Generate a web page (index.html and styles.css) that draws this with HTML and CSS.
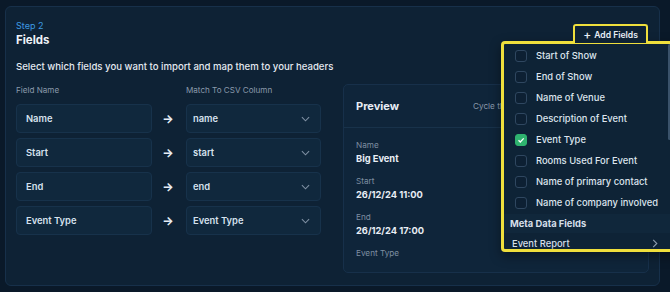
FILE: index.html
```html
<!DOCTYPE html>
<html lang="en">
<head>
  <meta charset="UTF-8"/>
  <title>Import - Fields</title>
  <link rel="stylesheet" href="styles.css">
</head>
<body>
  <div class="card">
    <div class="card-head">
      <div>
        <div class="step">Step 2</div>
        <h2>Fields</h2>
      </div>
      <button class="add-btn"><span class="plus">+</span> Add Fields</button>
    </div>
    <p class="intro">Select which fields you want to import and map them to your headers</p>

    <div class="content">
      <div class="mapping">
        <div class="map-head">
          <span>Field Name</span>
          <span></span>
          <span>Match To CSV Column</span>
        </div>
        <div class="map-row">
          <div class="field">Name</div>
          <span class="arrow">&#x2192;</span>
          <div class="select">name <svg viewBox="0 0 10 6"><path d="M1 1l4 4 4-4"/></svg></div>
        </div>
        <div class="map-row">
          <div class="field">Start</div>
          <span class="arrow">&#x2192;</span>
          <div class="select">start <svg viewBox="0 0 10 6"><path d="M1 1l4 4 4-4"/></svg></div>
        </div>
        <div class="map-row">
          <div class="field">End</div>
          <span class="arrow">&#x2192;</span>
          <div class="select">end <svg viewBox="0 0 10 6"><path d="M1 1l4 4 4-4"/></svg></div>
        </div>
        <div class="map-row">
          <div class="field">Event Type</div>
          <span class="arrow">&#x2192;</span>
          <div class="select">Event Type <svg viewBox="0 0 10 6"><path d="M1 1l4 4 4-4"/></svg></div>
        </div>
      </div>

      <div class="preview">
        <div class="preview-head">
          <h3>Preview</h3>
          <span class="cycle">Cycle through rows</span>
        </div>
        <div class="preview-body">
          <div class="pv-item"><div class="pv-label">Name</div><div class="pv-value">Big Event</div></div>
          <div class="pv-item"><div class="pv-label">Start</div><div class="pv-value">26/12/24 11:00</div></div>
          <div class="pv-item"><div class="pv-label">End</div><div class="pv-value">26/12/24 17:00</div></div>
          <div class="pv-item"><div class="pv-label">Event Type</div></div>
        </div>
      </div>
    </div>
  </div>

  <!-- Add fields menu -->
  <div class="menu">
    <label class="opt"><span class="box"></span>Start of Show</label>
    <label class="opt"><span class="box"></span>End of Show</label>
    <label class="opt"><span class="box"></span>Name of Venue</label>
    <label class="opt"><span class="box"></span>Description of Event</label>
    <label class="opt"><span class="box checked"><svg viewBox="0 0 10 10"><path d="M2.5 5.2l1.8 1.8 3.4-3.6"/></svg></span>Event Type</label>
    <label class="opt"><span class="box"></span>Rooms Used For Event</label>
    <label class="opt"><span class="box"></span>Name of primary contact</label>
    <label class="opt"><span class="box"></span>Name of company involved</label>
    <div class="menu-group">Meta Data Fields</div>
    <div class="menu-sub">Event Report <svg viewBox="0 0 6 10"><path d="M1 1l4 4-4 4"/></svg></div>
    <div class="scroll"></div>
  </div>
</body>
</html>
```

FILE: styles.css
```css
* { box-sizing: border-box; margin: 0; padding: 0; }
body {
  font-family: Inter, "Noto Sans", sans-serif;
  background: #0a1929;
  color: #dfe7f0;
  padding: 6px 10px 6px 5px;
  width: 670px;
  height: 292px;
  overflow: hidden;
  position: relative;
}

.card {
  height: 280px;
  background: #0e2235;
  border: 1px solid #17304a;
  border-radius: 6px;
  padding: 13px 10px 0 10px;
}
.card-head {
  display: flex;
  justify-content: space-between;
  align-items: flex-start;
}
.step {
  font-size: 9px;
  color: #3d9be2;
  line-height: 12px;
}
h2 {
  font-size: 11.5px;
  font-weight: 700;
  color: #eef3f8;
  line-height: 16px;
}
.add-btn {
  margin-top: 4px;
  margin-right: 1px;
  height: 19px;
  width: 75px;
  background: #0e2235;
  border: 2px solid #efdf3c;
  border-bottom: none;
  border-radius: 3px 3px 0 0;
  color: #e8eef5;
  font-family: inherit;
  font-size: 8.6px;
  font-weight: 600;
  display: flex;
  align-items: center;
  justify-content: center;
  gap: 3px;
  position: relative;
  z-index: 3;
}
.add-btn .plus { font-size: 12px; font-weight: 500; line-height: 1; }

.intro {
  margin-top: 12px;
  font-size: 9.6px;
  font-weight: 500;
  color: #e3e9f0;
  line-height: 14px;
}

.content {
  display: flex;
  gap: 22px;
  margin-top: 10px;
}
.mapping { width: 305px; }
.map-head {
  display: grid;
  grid-template-columns: 136px 34px 135px;
  font-size: 8.1px;
  color: #8b9aab;
  line-height: 13px;
  margin-bottom: 7px;
}
.map-row {
  display: grid;
  grid-template-columns: 136px 34px 135px;
  align-items: center;
  margin-bottom: 5px;
}
.field, .select {
  height: 29px;
  background: #10283d;
  border: 1px solid #17324b;
  border-radius: 4px;
  padding: 0 9px;
  display: flex;
  align-items: center;
  font-size: 9.4px;
  font-weight: 600;
  color: #d6e1ed;
}
.select { padding-left: 6px; justify-content: space-between; padding-right: 10px; }
.select svg {
  width: 9px;
  height: 6px;
  fill: none;
  stroke: #7f90a3;
  stroke-width: 1.2;
}
.arrow {
  text-align: center;
  font-size: 12px;
  font-weight: 700;
  color: #e6edf5;
  margin-left: -2px;
}

.preview {
  width: 306px;
  height: 189px;
  background: #0f253a;
  border: 1px solid #17304a;
  border-radius: 5px;
}
.preview-head {
  display: flex;
  align-items: center;
  height: 43px;
  padding: 0 12px;
  border-bottom: 1px solid #18324a;
}
h3 {
  font-size: 11px;
  font-weight: 700;
  color: #e8eef5;
  width: 117px;
}
.cycle {
  font-size: 8.2px;
  color: #8a99aa;
  width: 29px;
  white-space: nowrap;
  overflow: hidden;
}
.preview-body { padding: 11px 12px; }
.pv-item { margin-bottom: 9px; }
.pv-label {
  font-size: 8.2px;
  color: #7e8ea1;
  line-height: 12px;
}
.pv-value {
  font-size: 9.3px;
  font-weight: 700;
  color: #e8eef5;
  line-height: 15px;
}

/* Add fields menu */
.menu {
  position: absolute;
  left: 501px;
  top: 41px;
  width: 180px;
  height: 211px;
  background: #0e2336;
  border: 3px solid #efdf3c;
  border-radius: 4px;
  padding: 1px 0 0 0;
  z-index: 2;
  box-shadow: 0 4px 12px rgba(0,0,0,0.4);
}
.opt {
  display: flex;
  align-items: center;
  height: 21px;
  padding-left: 11px;
  gap: 9px;
  font-size: 9.4px;
  font-weight: 500;
  color: #dde5ee;
}
.box {
  width: 12px;
  height: 12px;
  border: 1px solid #2f4760;
  border-radius: 3px;
  background: #0d2033;
  display: flex;
  align-items: center;
  justify-content: center;
}
.box.checked {
  background: #2fb36f;
  border-color: #2fb36f;
}
.box svg {
  width: 10px;
  height: 10px;
  fill: none;
  stroke: #ffffff;
  stroke-width: 1.3;
}
.menu-group {
  margin-top: 1px;
  padding-left: 6px;
  height: 19px;
  line-height: 19px;
  font-size: 9.4px;
  font-weight: 700;
  color: #d6dfe9;
  background: #10273b;
}
.menu-sub {
  display: flex;
  align-items: center;
  justify-content: space-between;
  height: 20px;
  padding-left: 8px;
  padding-right: 20px;
  font-size: 9.4px;
  font-weight: 500;
  color: #d6dfe9;
}
.menu-sub svg {
  width: 6px;
  height: 9px;
  fill: none;
  stroke: #8d9cad;
  stroke-width: 1.2;
}
.scroll {
  position: absolute;
  left: 164px;
  top: 0;
  width: 3px;
  height: 96px;
  border-radius: 2px;
  background: #3a526a;
}
```
